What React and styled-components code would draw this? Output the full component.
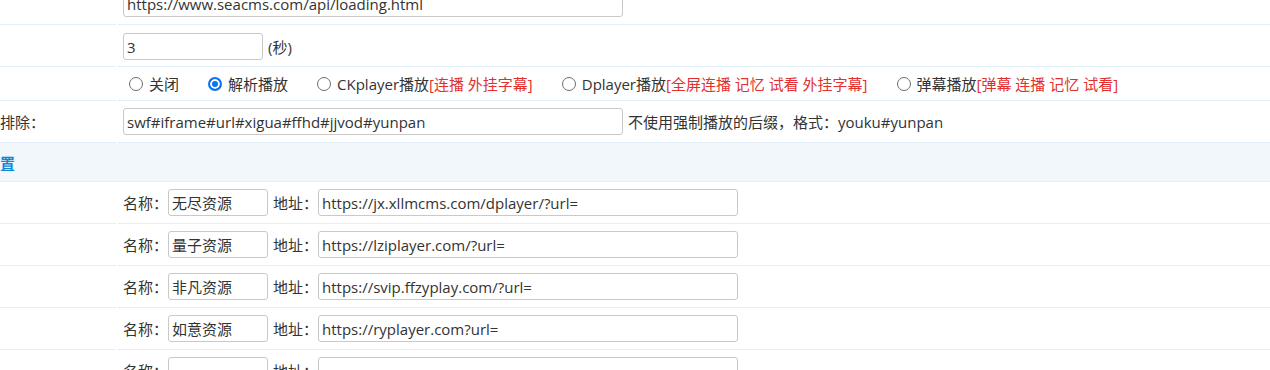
import React from "react";
import styled, { createGlobalStyle } from "styled-components";

const GlobalStyle = createGlobalStyle`
  html, body {
    margin: 0;
    padding: 0;
    background: #fff;
    overflow: hidden;
  }
  body {
    font-family: "Open Sans", "Noto Sans CJK SC", sans-serif;
    font-size: 15px;
    color: #333;
  }
`;

const Table = styled.div`
  margin-top: -17px;
  display: flex;
  flex-direction: column;
  width: 1270px;
`;

const Row = styled.div`
  display: flex;
  column-gap: 2px;
  height: ${(p) => p.$h || 42}px;
`;

const Cell = styled.div`
  box-sizing: border-box;
  border-bottom: 1px solid #e2eef8;
  display: flex;
  align-items: center;
  white-space: nowrap;
`;

const LabelCell = styled(Cell)`
  width: 116px;
  flex: none;
  padding-top: ${(p) => p.$pt || 0}px;
`;

const ContentCell = styled(Cell)`
  flex: 1;
  padding-left: 5px;
  padding-top: ${(p) => p.$pt || 0}px;
`;

const SectionHeader = styled.div`
  box-sizing: border-box;
  height: 39px;
  border-bottom: 1px solid #e2eef8;
  background: #f2f7fb;
  display: flex;
  align-items: center;
  color: #0d8ad3;
  font-weight: bold;
`;

const TextInput = styled.input`
  box-sizing: border-box;
  width: ${(p) => p.$w}px;
  height: 27px;
  margin: 0;
  padding: 0 3px;
  border: 1px solid #c9c9c9;
  border-radius: 3px;
  font-family: "Open Sans", "Noto Sans CJK SC", sans-serif;
  font-size: 15px;
  color: #333;
  background: #fff;
  outline: none;
`;

const Suffix = styled.span`
  margin-left: ${(p) => p.$ml || 5}px;
`;

const RadioGroup = styled.div`
  display: flex;
  align-items: center;
  column-gap: 29px;
  padding-left: 6px;
`;

const Option = styled.label`
  display: inline-flex;
  align-items: center;
  column-gap: 6px;
`;

const Radio = styled.input`
  appearance: none;
  box-sizing: border-box;
  width: 14px;
  height: 14px;
  margin: 0;
  border: 1px solid #6e6e6e;
  border-radius: 50%;
  background: #fff;
  flex: none;

  &:checked {
    border: 2px solid #0a74f5;
    background: #0a74f5;
    box-shadow: inset 0 0 0 2px #fff;
  }
`;

const Red = styled.span`
  color: #e2302f;
`;

const FieldLabel = styled.span``;

const Gap = styled.span`
  display: inline-block;
  flex: none;
  width: ${(p) => p.$w}px;
`;

const sources = [
  { name: "无尽资源", url: "https://jx.xllmcms.com/dplayer/?url=" },
  { name: "量子资源", url: "https://lziplayer.com/?url=" },
  { name: "非凡资源", url: "https://svip.ffzyplay.com/?url=" },
  { name: "如意资源", url: "https://ryplayer.com?url=" },
  { name: "", url: "" },
];

const options = [
  { text: "关闭", extra: "" },
  { text: "解析播放", extra: "", checked: true },
  { text: "CKplayer播放", extra: "[连播 外挂字幕]" },
  { text: "Dplayer播放", extra: "[全屏连播 记忆 试看 外挂字幕]" },
  { text: "弹幕播放", extra: "[弹幕 连播 记忆 试看]" },
];

export default function App() {
  return (
    <>
      <GlobalStyle />
      <Table>
        <Row>
          <LabelCell />
          <ContentCell>
            <TextInput $w={500} defaultValue="https://www.seacms.com/api/loading.html" />
          </ContentCell>
        </Row>
        <Row>
          <LabelCell />
          <ContentCell $pt={2}>
            <TextInput $w={140} defaultValue="3" />
            <Suffix $ml={5}>(秒)</Suffix>
          </ContentCell>
        </Row>
        <Row $h={34}>
          <LabelCell />
          <ContentCell>
            <RadioGroup>
              {options.map((o) => (
                <Option key={o.text}>
                  <Radio type="radio" name="playmode" defaultChecked={!!o.checked} />
                  <span>
                    {o.text}
                    {o.extra && <Red>{o.extra}</Red>}
                  </span>
                </Option>
              ))}
            </RadioGroup>
          </ContentCell>
        </Row>
        <Row>
          <LabelCell>排除：</LabelCell>
          <ContentCell>
            <TextInput $w={500} defaultValue="swf#iframe#url#xigua#ffhd#jjvod#yunpan" />
            <Suffix $ml={5}>不使用强制播放的后缀，格式：youku#yunpan</Suffix>
          </ContentCell>
        </Row>
        <SectionHeader>置</SectionHeader>
        {sources.map((s, i) => (
          <Row key={i}>
            <LabelCell />
            <ContentCell>
              <FieldLabel>名称：</FieldLabel>
              <TextInput $w={100} defaultValue={s.name} />
              <Gap $w={5} />
              <FieldLabel>地址：</FieldLabel>
              <TextInput $w={420} defaultValue={s.url} />
            </ContentCell>
          </Row>
        ))}
      </Table>
    </>
  );
}
